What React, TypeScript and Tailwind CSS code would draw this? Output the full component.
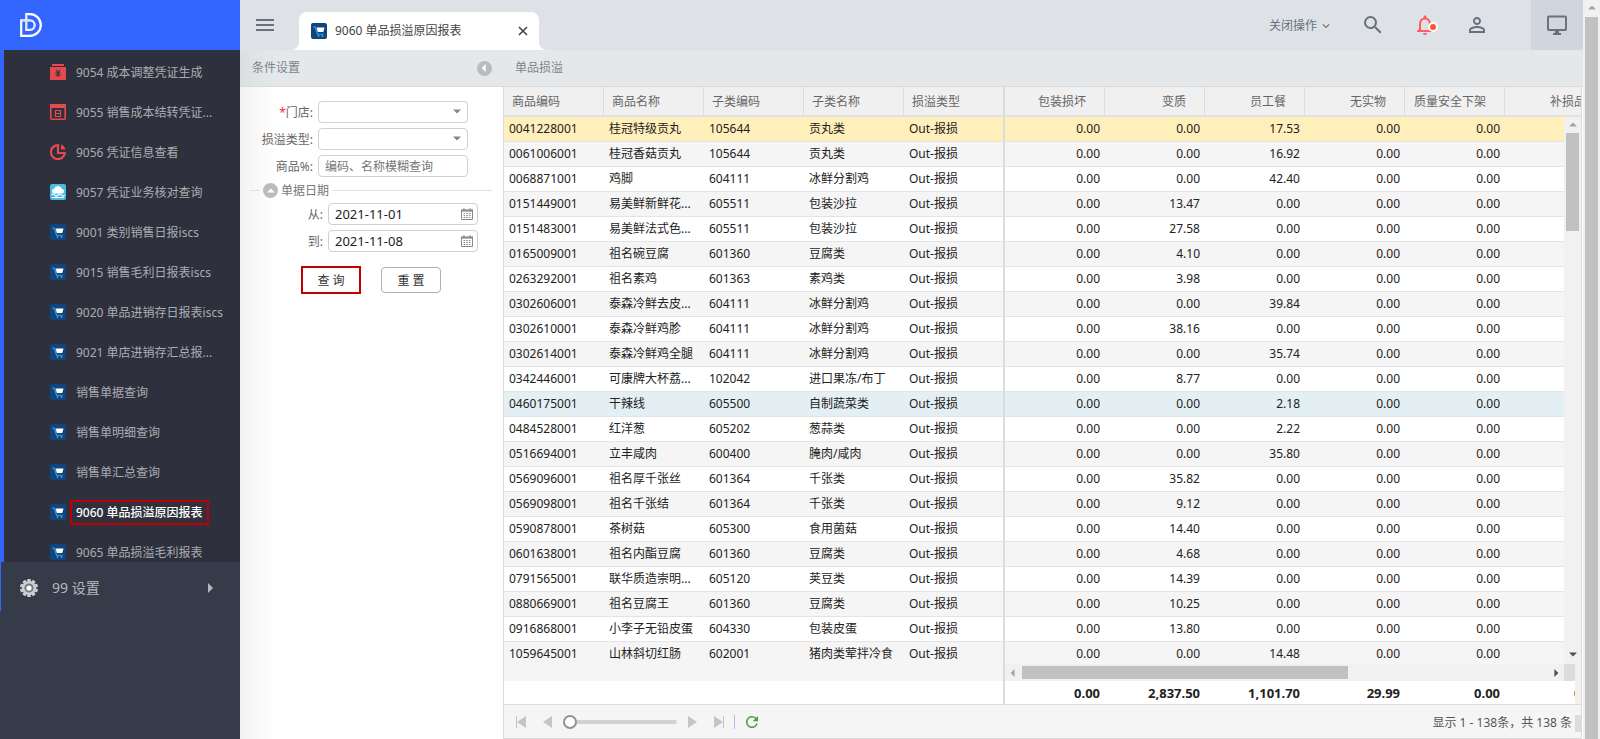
import type { ReactNode } from "react";
import { clsx } from "clsx";
import { MdMenu, MdSearch, MdNotificationsNone, MdPersonOutline, MdExpandMore, MdRefresh } from "react-icons/md";

type MenuIcon = "voucher" | "transfer" | "pie" | "cloud" | "cart";

const menuItems: { label: string; icon: MenuIcon; active?: boolean }[] = [
  { label: "9054 成本调整凭证生成", icon: "voucher" },
  { label: "9055 销售成本结转凭证...", icon: "transfer" },
  { label: "9056 凭证信息查看", icon: "pie" },
  { label: "9057 凭证业务核对查询", icon: "cloud" },
  { label: "9001 类别销售日报iscs", icon: "cart" },
  { label: "9015 销售毛利日报表iscs", icon: "cart" },
  { label: "9020 单品进销存日报表iscs", icon: "cart" },
  { label: "9021 单店进销存汇总报...", icon: "cart" },
  { label: "销售单据查询", icon: "cart" },
  { label: "销售单明细查询", icon: "cart" },
  { label: "销售单汇总查询", icon: "cart" },
  { label: "9060 单品损溢原因报表", icon: "cart", active: true },
  { label: "9065 单品损溢毛利报表", icon: "cart" },
];

const textColumns = ["商品编码", "商品名称", "子类编码", "子类名称", "损溢类型"];
const numberColumns = ["包装损坏", "变质", "员工餐", "无实物", "质量安全下架", "补损品"];

// code, name, category code, category name, spoiled, staff meal
const rows = [
  ["0041228001", "桂冠特级贡丸", "105644", "贡丸类", "0.00", "17.53"],
  ["0061006001", "桂冠香菇贡丸", "105644", "贡丸类", "0.00", "16.92"],
  ["0068871001", "鸡脚", "604111", "冰鲜分割鸡", "0.00", "42.40"],
  ["0151449001", "易美鲜新鲜花...", "605511", "包装沙拉", "13.47", "0.00"],
  ["0151483001", "易美鲜法式色...", "605511", "包装沙拉", "27.58", "0.00"],
  ["0165009001", "祖名碗豆腐", "601360", "豆腐类", "4.10", "0.00"],
  ["0263292001", "祖名素鸡", "601363", "素鸡类", "3.98", "0.00"],
  ["0302606001", "泰森冷鲜去皮...", "604111", "冰鲜分割鸡", "0.00", "39.84"],
  ["0302610001", "泰森冷鲜鸡胗", "604111", "冰鲜分割鸡", "38.16", "0.00"],
  ["0302614001", "泰森冷鲜鸡全腿", "604111", "冰鲜分割鸡", "0.00", "35.74"],
  ["0342446001", "可康牌大杯荔...", "102042", "进口果冻/布丁", "8.77", "0.00"],
  ["0460175001", "干辣线", "605500", "自制蔬菜类", "0.00", "2.18"],
  ["0484528001", "红洋葱", "605202", "葱蒜类", "0.00", "2.22"],
  ["0516694001", "立丰咸肉", "600400", "腌肉/咸肉", "0.00", "35.80"],
  ["0569096001", "祖名厚千张丝", "601364", "千张类", "35.82", "0.00"],
  ["0569098001", "祖名千张结", "601364", "千张类", "9.12", "0.00"],
  ["0590878001", "茶树菇", "605300", "食用菌菇", "14.40", "0.00"],
  ["0601638001", "祖名内酯豆腐", "601360", "豆腐类", "4.68", "0.00"],
  ["0791565001", "联华质造崇明...", "605120", "荚豆类", "14.39", "0.00"],
  ["0880669001", "祖名豆腐王", "601360", "豆腐类", "10.25", "0.00"],
  ["0916868001", "小李子无铅皮蛋", "604330", "包装皮蛋", "13.80", "0.00"],
  ["1059645001", "山林斜切红肠", "602001", "猪肉类荤拌冷食", "0.00", "14.48"],
];

const totals = ["0.00", "2,837.50", "1,101.70", "29.99", "0.00", "0.00"];

function Logo() {
  return (
    <svg width="22" height="24" viewBox="0 0 22 24" fill="none" stroke="#fff" strokeWidth="2.2">
      <path d="M1.2 7.4H10a4.7 4.7 0 0 1 0 9.4H6.3V1.2H10a10.8 10.8 0 0 1 0 21.6H1.2Z" />
      <path d="M1.2 7.4H10a4.7 4.7 0 0 1 0 9.4H6.3V1.2" stroke="#b9c9ff" strokeWidth="0.6" />
    </svg>
  );
}

function ItemIcon({ name }: { name: MenuIcon }) {
  if (name === "voucher") {
    return (
      <svg width="16" height="16" viewBox="0 0 16 16" className="shrink-0">
        <path d="M2 0h12v2H2zM0 3h16v13H0z" fill="#e5484d" />
        <path d="M6 6l2 2.500L10 6M5.500 9h5M5.500 11h5M8 8.500v4.500" stroke="#2e313d" strokeWidth="1.200" fill="none" />
      </svg>
    );
  }
  if (name === "transfer") {
    return (
      <svg width="16" height="16" viewBox="0 0 16 16" className="shrink-0" fill="none" stroke="#e5484d">
        <rect x="0.8" y="0.8" width="14.4" height="14.4" rx="1" strokeWidth="1.6" />
        <path d="M0 2h16" strokeWidth="4" />
        <path d="M5.5 6.5h5v6h-5zM5.5 9.5h5" strokeWidth="1.2" />
      </svg>
    );
  }
  if (name === "pie") {
    return (
      <svg width="16" height="16" viewBox="0 0 16 16" className="shrink-0" fill="none" stroke="#e5484d">
        <path d="M9 1.2A7 7 0 1 0 14.9 9H8V1.2" strokeWidth="2.2" />
        <path d="M11 0.5a7 7 0 0 1 4.5 5H11z" fill="#e5484d" stroke="none" />
      </svg>
    );
  }
  if (name === "cloud") {
    return (
      <svg width="16" height="16" viewBox="0 0 16 16" className="shrink-0">
        <rect width="16" height="16" rx="2" fill="#4cbbe0" />
        <path d="M3.500 9.500a2.500 2.500 0 0 1 .5-4.800 4.200 4.200 0 0 1 7.800 0 2.500 2.500 0 0 1 .7 4.800z" fill="#fff" />
        <path d="M1.500 11q2-2 3.300 0t3.200 0 3.200 0 3.300 0M2 13.500h12" fill="none" stroke="#fff" strokeWidth="1.100" />
      </svg>
    );
  }
  return (
    <svg width="16" height="16" viewBox="0 0 16 16" className="shrink-0">
      <rect width="16" height="16" rx="2" fill="#11457e" />
      <path d="M2 4h2.200l2.300 7.200h6" fill="none" stroke="#3e9fd8" strokeWidth="1.100" />
      <path d="M5.500 4.500h8L12.300 9H6.800z" fill="#fff" />
      <circle cx="7.500" cy="13" r="1" fill="#3e9fd8" />
      <circle cx="11.500" cy="13" r="1" fill="#3e9fd8" />
    </svg>
  );
}

function Gear() {
  const teeth = [0, 36, 72, 108, 144];
  return (
    <svg width="18" height="18" viewBox="0 0 18 18" className="shrink-0">
      {teeth.map((a) => (
        <rect key={a} x="7.200" y="0" width="3.600" height="18" rx="0.600" fill="#c9ced2" transform={`rotate(${a} 9 9)`} />
      ))}
      <circle cx="9" cy="9" r="7" fill="#c9ced2" />
      <circle cx="9" cy="9" r="3.600" fill="#fff" stroke="#777b80" strokeWidth="2" />
    </svg>
  );
}

function Triangle({ dir, className }: { dir: "up" | "down" | "left" | "right"; className?: string }) {
  const points = {
    up: "0,7 5,2 10,7",
    down: "0,3 5,8 10,3",
    left: "7,0 2,5 7,10",
    right: "3,0 8,5 3,10",
  };
  return (
    <svg viewBox="0 0 10 10" className={clsx("shrink-0 fill-current", className)}>
      <polygon points={points[dir]} />
    </svg>
  );
}

function CalendarIcon() {
  return (
    <svg width="12" height="12" viewBox="0 0 12 12" fill="none" stroke="#858a90">
      <path d="M0.500 2v9.500h11V2" />
      <path d="M0 2.500h12" strokeWidth="2.200" />
      <path d="M3 0v3M9 0v3" />
      <path d="M2.500 5.500h7M2.500 7.500h7M2.500 9.500h7" strokeDasharray="1.600 1.100" />
    </svg>
  );
}

function Monitor() {
  return (
    <svg width="22" height="20" viewBox="0 0 22 20" fill="none" stroke="#66717d" strokeWidth="2">
      <rect x="2" y="1.500" width="18" height="13.500" rx="1" />
      <path d="M11 15v4" strokeWidth="4" />
      <path d="M7 19h8" />
    </svg>
  );
}

function Sidebar() {
  return (
    <aside className="flex w-60 shrink-0 flex-col bg-[#363b49]">
      <a href="#" aria-label="首页" className="flex h-[50px] shrink-0 items-center bg-[#3366ff] pl-5">
        <Logo />
      </a>

      <nav className="h-[512px] shrink-0 overflow-hidden border-l-4 border-[#3366ff] bg-[#2e313d] pt-0.5">
        {menuItems.map((item) => (
          <a key={item.label} href="#" className="flex h-10 items-center pl-[46px] text-[#aaadb2]">
            <ItemIcon name={item.icon} />
            <span
              className={clsx(
                "ml-1 border-2 px-1 leading-[21px] whitespace-nowrap",
                item.active ? "border-[#c00000] font-medium text-white" : "border-transparent"
              )}
            >
              {item.label}
            </span>
          </a>
        ))}
      </nav>

      <a href="#" className="flex h-[49px] items-center border-l border-[#3366ff] pt-0.5 pl-[19px] text-sm text-[#b4b7bd]">
        <Gear />
        <span className="ml-3.5 flex-1">99 设置</span>
        <Triangle dir="right" className="mr-[25px] size-2.5" />
      </a>
    </aside>
  );
}

function Topbar() {
  return (
    <header className="flex h-[50px] shrink-0 items-center bg-[#dee1e6] text-[#66717d]">
      <button aria-label="菜单" className="ml-[13px]">
        <MdMenu size={24} />
      </button>

      <div className="ml-[14px] flex h-full items-end">
        <span className="size-2 bg-white">
          <span className="block size-2 rounded-br-lg bg-[#dee1e6]" />
        </span>
        <div className="flex h-[38px] w-60 items-center rounded-t-lg bg-white pr-2.5 pl-3 text-[#444]">
          <ItemIcon name="cart" />
          <span className="ml-2 flex-1">9060 单品损溢原因报表</span>
          <button aria-label="关闭" className="p-px">
            <svg width="10" height="10" viewBox="0 0 10 10" stroke="#444" strokeWidth="1.600">
              <path d="M1 1l8 8M9 1l-8 8" />
            </svg>
          </button>
        </div>
        <span className="size-2 bg-white">
          <span className="block size-2 rounded-bl-lg bg-[#dee1e6]" />
        </span>
      </div>

      <button className="ml-auto flex items-center gap-0.5 pt-0.5">
        关闭操作
        <MdExpandMore size={14} />
      </button>
      <button aria-label="搜索" className="ml-7">
        <MdSearch size={24} />
      </button>
      <button aria-label="通知" className="relative ml-7 text-[#ff5c5c]">
        <MdNotificationsNone size={24} />
        <span className="absolute top-[9px] right-[-1px] size-2.5 rounded-full border-2 border-white bg-[#ff5533]" />
      </button>
      <button aria-label="用户" className="ml-7">
        <MdPersonOutline size={24} />
      </button>
      <button aria-label="桌面" className="ml-[42px] flex h-full w-[52px] items-center justify-center bg-[#d1d6de]">
        <Monitor />
      </button>
    </header>
  );
}

const fieldClass = "h-[22px] w-[150px] rounded-sm border border-[#d0d0d0] bg-white px-1.5 outline-none";

function Field({ id, label, children }: { id: string; label: ReactNode; children: ReactNode }) {
  return (
    <div className="flex h-[22px] items-center">
      <label htmlFor={id} className="mr-[5px] w-[73px] pt-0.5 text-right">
        {label}
      </label>
      <div className="relative h-[22px]">{children}</div>
    </div>
  );
}

function SelectField({ id, label }: { id: string; label: ReactNode }) {
  return (
    <Field id={id} label={label}>
      <select id={id} className={clsx(fieldClass, "appearance-none")}>
        <option value=""></option>
      </select>
      <Triangle dir="down" className="pointer-events-none absolute top-1.5 right-[7px] size-2 text-[#80858e]" />
    </Field>
  );
}

function DateField({ id, label, value }: { id: string; label: string; value: string }) {
  return (
    <div className="pl-2.5">
      <Field id={id} label={label}>
        <input id={id} type="text" defaultValue={value} className={clsx(fieldClass, "text-[13px] text-[#222]")} />
        <button type="button" aria-label="选择日期" className="absolute top-[5px] right-[5px]">
          <CalendarIcon />
        </button>
      </Field>
    </div>
  );
}

function FilterPanel() {
  return (
    <section className="flex w-[263px] shrink-0 flex-col bg-[linear-gradient(to_right,#f2f2f2,#fff_36px)]">
      <div className="flex h-[37px] items-center justify-between border-b border-[#d8dadb] bg-[linear-gradient(to_right,#dadfe1,#e4e8eb_36px)] pr-[11px] pl-3 text-[#808488]">
        <h2>条件设置</h2>
        <button aria-label="收起" className="flex size-[15px] items-center justify-center rounded-full bg-[#bbb] text-white">
          <Triangle dir="left" className="mr-px size-2" />
        </button>
      </div>

      <form className="flex flex-col gap-[5px] pt-3.5 text-[#666]">
        <SelectField
          id="store"
          label={
            <>
              <span className="text-red-500">*</span>门店:
            </>
          }
        />
        <SelectField id="lossType" label="损溢类型:" />
        <Field id="product" label="商品%:">
          <input
            id="product"
            type="text"
            placeholder="编码、名称模糊查询"
            className={clsx(fieldClass, "placeholder:text-[#777]")}
          />
        </Field>

        <fieldset className="flex flex-col gap-[5px]">
          <legend className="flex h-[21px] w-full items-center pr-[11px] pb-1 pl-2.5">
            <span className="h-px w-2.5 bg-[#e0e0e0]" />
            <button
              type="button"
              aria-label="折叠"
              className="mx-[3px] flex size-[15px] items-center justify-center rounded-full bg-[#bbb] text-white"
            >
              <Triangle dir="up" className="size-2" />
            </button>
            <span className="text-[#777]">单据日期</span>
            <span className="ml-[3px] h-px flex-1 bg-[#e0e0e0]" />
          </legend>
          <DateField id="from" label="从:" value="2021-11-01" />
          <DateField id="to" label="到:" value="2021-11-08" />
        </fieldset>

        <div className="mt-[9px] flex items-center gap-5 pl-[61px] text-[#333]">
          <button type="button" className="h-7 w-[60px] border-2 border-[#c00000] bg-white pt-0.5">
            查 询
          </button>
          <button type="button" className="h-[26px] w-[60px] rounded-sm border border-[#b0b0b0] bg-white pt-0.5">
            重 置
          </button>
        </div>
      </form>
    </section>
  );
}

function Columns() {
  return (
    <colgroup>
      {textColumns.map((c, i) => (
        <col key={c} className={i === textColumns.length - 1 ? "w-[101px]" : "w-[100px]"} />
      ))}
      {numberColumns.map((c) => (
        <col key={c} className="w-[100px]" />
      ))}
    </colgroup>
  );
}

const tableClass = "w-[1101px] table-fixed border-separate border-spacing-0";
const lockLine = "border-r-2 border-r-[#dcdcdc]";

function GridHeader() {
  return (
    <div className="shrink-0 overflow-hidden">
      <table className={tableClass}>
        <Columns />
        <thead>
          <tr className="h-[30px] bg-[#f0f0f0] text-[#666]">
            {textColumns.map((c, i) => (
              <th
                key={c}
                className={clsx(
                  "border-b-2 border-b-[#e2e2e2] px-2 pt-0.5 text-left font-normal",
                  i === textColumns.length - 1 ? lockLine : "border-r border-r-[#dcdcdc]"
                )}
              >
                {c}
              </th>
            ))}
            {numberColumns.map((c) => (
              <th
                key={c}
                className="border-r border-b-2 border-r-[#dcdcdc] border-b-[#e2e2e2] pt-0.5 pr-[18px] text-right font-normal whitespace-nowrap"
              >
                {c}
              </th>
            ))}
          </tr>
        </thead>
      </table>
    </div>
  );
}

function GridBody() {
  return (
    <div className="flex min-h-0 flex-1">
      <div className="min-w-0 flex-1 overflow-hidden">
        <table className={tableClass}>
          <Columns />
          <tbody>
            {rows.map(([code, name, catCode, catName, spoiled, meal], i) => {
              const text = [code, name, catCode, catName, "Out-报损"];
              const numbers = ["0.00", spoiled, meal, "0.00", "0.00", ""];
              return (
                <tr
                  key={code}
                  className={clsx(
                    "h-[25px]",
                    i === 0 ? "bg-[#ffefbb]" : i === 11 ? "bg-[#e4eff4]" : i % 2 ? "bg-[#f5f5f5]" : "bg-white"
                  )}
                >
                  {text.map((t, j) => (
                    <td
                      key={j}
                      className={clsx(
                        "border-b border-b-[#e4e4e4] pl-[5px] whitespace-nowrap",
                        j === text.length - 1 && lockLine
                      )}
                    >
                      {t}
                    </td>
                  ))}
                  {numbers.map((n, j) => (
                    <td key={j} className="border-b border-b-[#e4e4e4] pr-[5px] text-right">
                      {n}
                    </td>
                  ))}
                </tr>
              );
            })}
          </tbody>
        </table>
      </div>
      <div className="flex w-[17px] shrink-0 flex-col items-center bg-[#f1f1f1]">
        <Triangle dir="up" className="my-1 size-2 text-[#a3a3a3]" />
        <div className="h-[98px] w-[13px] bg-[#c1c1c1]" />
        <Triangle dir="down" className="mt-auto mb-1.5 size-2 text-[#505050]" />
      </div>
    </div>
  );
}

function GridFooter() {
  return (
    <>
      <div className="flex h-[17px] shrink-0">
        <div className={clsx("w-[501px] shrink-0 bg-[#f5f5f5]", lockLine)} />
        <div className="flex flex-1 items-center bg-[#f1f1f1]">
          <Triangle dir="left" className="mx-1 size-2 text-[#a3a3a3]" />
          <div className="ml-px h-[13px] w-[326px] bg-[#c1c1c1]" />
          <Triangle dir="right" className="mr-1 ml-auto size-2 text-[#505050]" />
        </div>
        <div className="mr-1.5 w-[11px] bg-[#dcdcdc]" />
      </div>

      <div className="flex shrink-0 border-b border-[#dcdcdc]">
        <div className="min-w-0 flex-1 overflow-hidden bg-white">
          <table className={tableClass}>
            <Columns />
            <tfoot>
              <tr className="h-[23px] text-[13px] font-bold">
                <td colSpan={5} className={lockLine}></td>
                {totals.map((t, i) => (
                  <td key={i} className="pr-[5px] text-right">
                    {t}
                  </td>
                ))}
              </tr>
            </tfoot>
          </table>
        </div>
        <div className="w-1.5 bg-[#f1f1f1]" />
      </div>
    </>
  );
}

function Pager() {
  return (
    <div className="flex h-[34px] shrink-0 items-center border-b border-[#d8d8d8] bg-[#f5f5f5] pl-3 text-[#c2c5c8]">
      <button aria-label="第一页" className="flex items-center">
        <span className="h-3 w-px bg-current" />
        <svg width="9" height="12" viewBox="0 0 9 12" className="fill-current">
          <path d="M9 0v12L0 6z" />
        </svg>
      </button>
      <button aria-label="上一页" className="ml-[17px]">
        <svg width="9" height="12" viewBox="0 0 9 12" className="fill-current">
          <path d="M9 0v12L0 6z" />
        </svg>
      </button>
      <input
        type="range"
        aria-label="页码"
        min={1}
        max={10}
        defaultValue={1}
        className="ml-[11px] h-1 w-[114px] appearance-none rounded-full bg-[#d2d2d2] [&::-webkit-slider-thumb]:size-3.5 [&::-webkit-slider-thumb]:appearance-none [&::-webkit-slider-thumb]:rounded-full [&::-webkit-slider-thumb]:border-2 [&::-webkit-slider-thumb]:border-[#8f9499] [&::-webkit-slider-thumb]:bg-white"
      />
      <button aria-label="下一页" className="ml-[11px]">
        <svg width="9" height="12" viewBox="0 0 9 12" className="fill-current">
          <path d="M0 0v12l9-6z" />
        </svg>
      </button>
      <button aria-label="最后一页" className="ml-[17px] flex items-center">
        <svg width="9" height="12" viewBox="0 0 9 12" className="fill-current">
          <path d="M0 0v12l9-6z" />
        </svg>
        <span className="h-3 w-px bg-current" />
      </button>
      <span className="ml-2.5 h-3.5 w-px bg-[#9fc3ee]" />
      <button aria-label="刷新" className="ml-2 text-[#43a047]">
        <MdRefresh size={18} />
      </button>
      <p className="mr-[3px] ml-auto pt-0.5 text-[#555]">显示 1 - 138条，共 138 条</p>
      <span className="mt-1 h-[17px] w-1.5 bg-[#dcdcdc]" />
    </div>
  );
}

export default function App() {
  return (
    <div className="flex h-screen overflow-hidden bg-white font-['Noto_Sans','Noto_Sans_CJK_SC',sans-serif] text-xs leading-4 text-[#222]">
      <Sidebar />

      <div className="flex min-w-0 flex-1 flex-col">
        <Topbar />
        <main className="flex min-h-0 flex-1">
          <FilterPanel />
          <section className="flex min-w-0 flex-1 flex-col">
            <h2 className="flex h-[37px] shrink-0 items-center border-b border-[#d8dadb] bg-[#e4e8eb] pl-3 text-[#808488]">
              单品损溢
            </h2>
            <div className="mr-px flex min-h-0 flex-1 flex-col border-x border-[#dcdcdc] bg-[#f1f1f1]">
              <GridHeader />
              <GridBody />
              <GridFooter />
              <Pager />
            </div>
          </section>
        </main>
      </div>

      <div className="flex w-[17px] shrink-0 flex-col items-center bg-[#f1f1f1]">
        <Triangle dir="up" className="my-1 size-2 text-[#a3a3a3]" />
        <div className="mt-px w-[13px] flex-1 bg-[#c1c1c1]" />
      </div>
    </div>
  );
}
